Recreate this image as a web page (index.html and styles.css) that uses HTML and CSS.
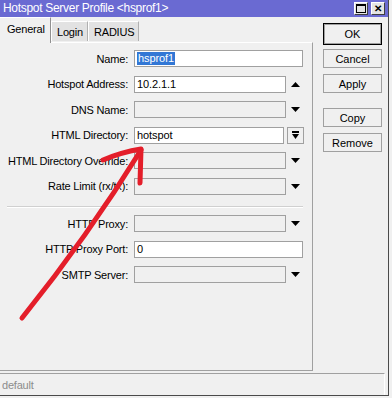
FILE: index.html
```html
<!DOCTYPE html>
<html lang="en">
<head>
    <meta charset="UTF-8">
    <title>Hotspot Server Profile</title>
    <link rel="stylesheet" href="styles.css">
</head>
<body>
    <div class="window">
        <div class="titlebar">
            <span class="title">Hotspot Server Profile &lt;hsprof1&gt;</span>
            <div class="tb-buttons">
                <span class="tb-btn"><span class="max-box"></span></span>
                <span class="tb-btn close">&#x2715;</span>
            </div>
        </div>

        <div class="main">
            <div class="left">
                <div class="tabs">
                    <div class="tab active">General</div>
                    <div class="tab">Login</div>
                    <div class="tab">RADIUS</div>
                </div>

                <div class="panel">
                    <div class="row">
                        <label>Name:</label>
                        <div class="input full"><span class="selected">hsprof1</span></div>
                    </div>
                    <div class="row">
                        <label>Hotspot Address:</label>
                        <div class="input">10.2.1.1</div>
                        <svg class="arrow-btn" width="9" height="5" viewBox="0 0 9 5"><polygon points="4.5,0 9,5 0,5" fill="#000"/></svg>
                    </div>
                    <div class="row">
                        <label>DNS Name:</label>
                        <div class="input disabled"></div>
                        <svg class="arrow-btn" width="9" height="5" viewBox="0 0 9 5"><polygon points="0,0 9,0 4.5,5" fill="#000"/></svg>
                    </div>
                    <div class="row">
                        <label>HTML Directory:</label>
                        <div class="input mid">hotspot</div>
                        <div class="drop-box">
                            <svg width="7" height="8" viewBox="0 0 7 8"><rect x="0" y="0" width="7" height="2" fill="#000"/><polygon points="0,3 7,3 3.5,8" fill="#000"/></svg>
                        </div>
                    </div>
                    <div class="row">
                        <label>HTML Directory Override:</label>
                        <div class="input disabled"></div>
                        <svg class="arrow-btn" width="9" height="5" viewBox="0 0 9 5"><polygon points="0,0 9,0 4.5,5" fill="#000"/></svg>
                    </div>
                    <div class="row">
                        <label>Rate Limit (rx/tx):</label>
                        <div class="input disabled"></div>
                        <svg class="arrow-btn" width="9" height="5" viewBox="0 0 9 5"><polygon points="0,0 9,0 4.5,5" fill="#000"/></svg>
                    </div>

                    <div class="separator"></div>

                    <div class="row">
                        <label>HTTP Proxy:</label>
                        <div class="input disabled"></div>
                        <svg class="arrow-btn" width="9" height="5" viewBox="0 0 9 5"><polygon points="0,0 9,0 4.5,5" fill="#000"/></svg>
                    </div>
                    <div class="row">
                        <label>HTTP Proxy Port:</label>
                        <div class="input full">0</div>
                    </div>
                    <div class="row">
                        <label>SMTP Server:</label>
                        <div class="input disabled"></div>
                        <svg class="arrow-btn" width="9" height="5" viewBox="0 0 9 5"><polygon points="0,0 9,0 4.5,5" fill="#000"/></svg>
                    </div>
                </div>
            </div>

            <div class="actions">
                <button class="btn default">OK</button>
                <button class="btn">Cancel</button>
                <button class="btn">Apply</button>
                <button class="btn spaced">Copy</button>
                <button class="btn">Remove</button>
            </div>
        </div>

        <div class="status">default</div>
    </div>

    <!-- red annotation arrow drawn over the dialog -->
    <svg class="annotation" width="392" height="398" viewBox="0 0 392 398">
        <path d="M22 318 Q 88 236 141 150" fill="none" stroke="#e41e2a" stroke-width="5" stroke-linecap="round"/>
        <path d="M103 160 Q 122 152 141 149 L 140 183" fill="none" stroke="#e41e2a" stroke-width="5" stroke-linecap="round" stroke-linejoin="round"/>
    </svg>
</body>
</html>
```

FILE: styles.css
```css
body {
    margin: 0;
    padding: 0;
    background-color: #f0f0f0;
    font-family: "Liberation Sans", Arial, sans-serif;
    font-size: 11px;
    color: #000;
}

.window {
    width: 388px;
    height: 395px;
    background-color: #f0f0f0;
    border-right: 1px solid #4a4a4a;
    border-bottom: 1px solid #4a4a4a;
    display: flex;
    flex-direction: column;
}

.titlebar {
    height: 17px;
    background-color: #6a6ad2;
    color: #fff;
    display: flex;
    align-items: center;
    justify-content: space-between;
}

.title {
    font-size: 12px;
    letter-spacing: -0.3px;
    padding-left: 3px;
    padding-bottom: 1px;
}

.tb-buttons {
    display: flex;
    gap: 3px;
    margin-right: 3px;
}

.tb-btn {
    width: 12px;
    height: 11px;
    background-color: #e4e4e4;
    border: 1px solid;
    border-color: #fff #404040 #404040 #fff;
    display: flex;
    align-items: center;
    justify-content: center;
    color: #000;
    font-size: 10px;
    font-weight: bold;
    line-height: 1;
}

.max-box {
    width: 8px;
    height: 6px;
    border: 1px solid #000;
    border-top-width: 2px;
}

.main {
    display: flex;
    height: 354px;
}

.left {
    width: 313px;
    display: flex;
    flex-direction: column;
}

.tabs {
    height: 25px;
    display: flex;
    align-items: flex-end;
}

.tab {
    box-sizing: border-box;
    height: 20px;
    margin-bottom: 1px;
    padding: 0 5px;
    background-color: #e2e2e2;
    border-top: 1px solid #fff;
    border-left: 1px solid #fff;
    border-right: 1px solid #b0b0b0;
    display: flex;
    align-items: center;
    letter-spacing: -0.2px;
}

.tab:nth-child(2) { width: 37px; }
.tab:nth-child(3) { width: 51px; }

.tab.active {
    height: 26px;
    width: 51px;
    margin-bottom: -1px;
    padding: 0 0 4px 7px;
    background-color: #f0f0f0;
    border-left: none;
    border-right: 1px solid #909090;
    position: relative;
}

.panel {
    box-sizing: border-box;
    height: 329px;
    border-top: 1px solid #fff;
    border-right: 1px solid #a0a0a0;
    border-bottom: 1px solid #a0a0a0;
    padding-top: 7px;
    display: flex;
    flex-direction: column;
    gap: 8.6px;
}

.row {
    display: flex;
    align-items: center;
    height: 17px;
}

.row label {
    width: 128px;
    text-align: right;
    margin-right: 6px;
    letter-spacing: -0.2px;
    white-space: nowrap;
}

.input {
    box-sizing: border-box;
    width: 152px;
    height: 17px;
    border: 1px solid #a0a0a0;
    background-color: #fff;
    padding-left: 2px;
    display: flex;
    align-items: center;
    letter-spacing: -0.1px;
}

.input.full { width: 169px; }
.input.mid { width: 150px; }

.input.disabled {
    background-color: #f0f0f0;
}

.selected {
    background-color: #3277d5;
    color: #fff;
    padding: 0 1px;
    line-height: 13px;
}

.arrow-btn {
    margin-left: 5px;
}

.drop-box {
    box-sizing: border-box;
    width: 17px;
    height: 17px;
    margin-left: 3px;
    border: 1px solid #a0a0a0;
    background-color: #f0f0f0;
    display: flex;
    align-items: center;
    justify-content: center;
}

.separator {
    height: 1px;
    width: 296px;
    margin: 2.5px 0 -1.5px 7px;
    background-color: #d0d0d0;
    border-bottom: 1px solid #fff;
}

.actions {
    display: flex;
    flex-direction: column;
    margin-left: 10px;
    padding-top: 6px;
}

.btn {
    box-sizing: border-box;
    width: 59px;
    height: 19px;
    margin-top: 6px;
    padding: 0;
    border: 1px solid #a0a0a0;
    background-color: #f0f0f0;
    font-family: "Liberation Sans", Arial, sans-serif;
    font-size: 11px;
    color: #000;
}

.btn.default {
    height: 22px;
    margin-top: 0;
    border: 1px solid #000;
    box-shadow: inset 0 0 0 1px #a0a0a0;
}

.btn:nth-child(2) { margin-top: 4px; }

.btn.spaced { margin-top: 15px; }

.status {
    box-sizing: border-box;
    width: 385px;
    height: 22px;
    margin-top: 2px;
    border-top: 1px solid #a0a0a0;
    border-right: 1px solid #fff;
    padding-left: 2px;
    display: flex;
    align-items: center;
    color: #8c8c8c;
    letter-spacing: -0.2px;
}

.annotation {
    position: absolute;
    top: 0;
    left: 0;
    pointer-events: none;
}
```
